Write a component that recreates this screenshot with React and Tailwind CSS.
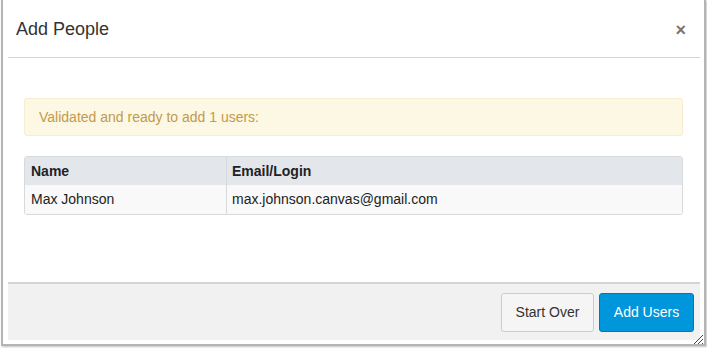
import React from 'react';

export default function App() {
  return (
    <div className="w-[707px] h-[348px] bg-white font-['Liberation_Sans',Arial,sans-serif] text-[#333]">
      <div className="ml-[1px] w-[705px] h-[346px] border-l-2 border-r-2 border-b-2 border-[#b4b4b4] bg-white flex flex-col pl-[5px] pr-[4px] pb-[4px] shadow-[1px_1px_2px_rgba(0,0,0,0.25)]">
        {/* header */}
        <div className="h-[58px] shrink-0 flex items-center justify-between pl-[8px] pr-[14px] border-b border-[#d4d4d4]">
          <h1 className="text-[18px] text-[#333] pt-[2px]">Add People</h1>
          <button className="text-[#777] text-[18px] leading-none pt-[2px] font-bold">×</button>
        </div>

        {/* body */}
        <div className="flex-1 pl-[16px] pr-[17px] pt-[40px]">
          <div className="h-[38px] flex items-center px-[14px] bg-[#fcf8e3] border border-[#f8ecd2] rounded-[3px] text-[14px] text-[#c39a4d]">
            Validated and ready to add 1 users:
          </div>

          <div className="mt-[20px] border border-[#d7dadd] rounded-[3px] overflow-hidden text-[14px]">
            <div className="grid grid-cols-[202px_1fr] h-[28px] bg-[#e3e7eb] font-bold text-[#222]">
              <div className="flex items-center px-[6px] border-r border-[#d7dadd]">Name</div>
              <div className="flex items-center px-[5px]">Email/Login</div>
            </div>
            <div className="grid grid-cols-[202px_1fr] h-[29px] bg-[#f9f9f9] text-[#222]">
              <div className="flex items-center px-[6px] border-r border-[#d7dadd]">Max Johnson</div>
              <div className="flex items-center px-[5px]">max.johnson.canvas@gmail.com</div>
            </div>
          </div>
        </div>

        {/* footer */}
        <div className="h-[58px] shrink-0 bg-[#f1f1f1] border-t-2 border-[#d4d4d4] flex items-center justify-end gap-[5px] pr-[6px] relative">
          <button className="h-[39px] w-[93px] bg-[#f5f5f5] border border-[#c7cdd1] rounded-[3px] text-[14px] text-[#333]">
            Start Over
          </button>
          <button className="h-[39px] w-[95px] bg-[#0096db] border border-[#0079b0] rounded-[3px] text-[14px] text-white">
            Add Users
          </button>
          <svg className="absolute right-[-4px] bottom-[-5px]" width="12" height="12" viewBox="0 0 12 12">
            <path d="M11 2 L2 11 M11 6 L6 11 M11 10 L10 11" stroke="#444" strokeWidth="1" />
          </svg>
        </div>
      </div>
    </div>
  );
}
